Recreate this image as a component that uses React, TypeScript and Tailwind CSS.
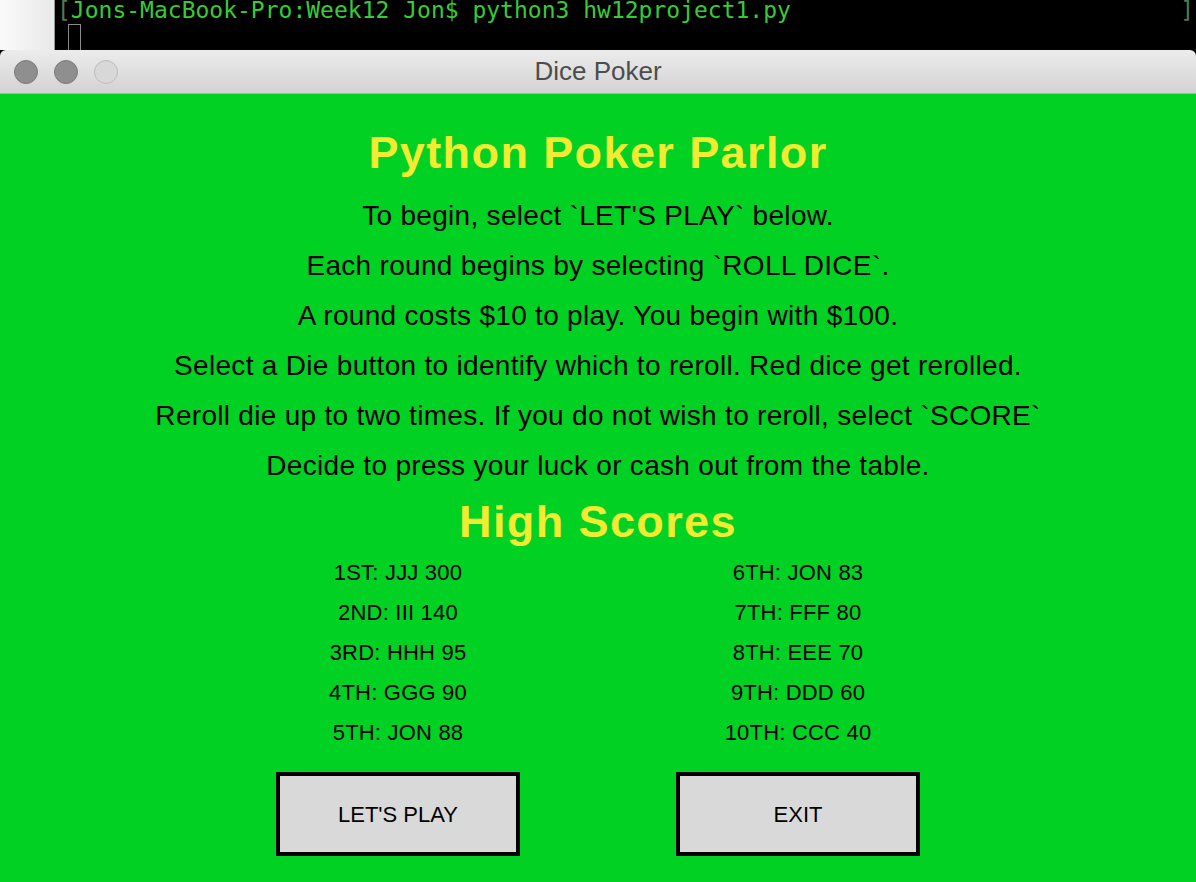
const rules = [
  'To begin, select `LET\'S PLAY` below.',
  'Each round begins by selecting `ROLL DICE`.',
  'A round costs $10 to play. You begin with $100.',
  'Select a Die button to identify which to reroll. Red dice get rerolled.',
  'Reroll die up to two times. If you do not wish to reroll, select `SCORE`',
  'Decide to press your luck or cash out from the table.',
];

const leftScores = ['1ST: JJJ 300', '2ND: III 140', '3RD: HHH 95', '4TH: GGG 90', '5TH: JON 88'];
const rightScores = ['6TH: JON 83', '7TH: FFF 80', '8TH: EEE 70', '9TH: DDD 60', '10TH: CCC 40'];

const sans = "font-['Liberation_Sans',Arial,Helvetica,sans-serif]";

const App: React.FC = () => {
  return (
    <div className={`w-[1196px] h-[882px] overflow-hidden flex flex-col bg-black ${sans}`}>
      {/* terminal behind the window */}
      <div className="flex h-[50px] shrink-0">
        <div className="w-[55px] bg-gradient-to-r from-[#fafafa] to-[#e9e9e9] border-r border-[#9a9a9a]" />
        <div className="flex-1 bg-black relative font-['DejaVu_Sans_Mono',monospace] text-[23px] leading-[20px] pl-[2px]">
          <div className="flex">
            <span className="text-[#4f7d4f]">[</span>
            <span className="text-[#36cc36] whitespace-pre">Jons-MacBook-Pro:Week12 Jon$ python3 hw12project1.py</span>
            <span className="ml-auto mr-[2px] text-[#4f7d4f]">]</span>
          </div>
          <div className="ml-[11px] mt-[4px] w-[13px] h-[30px] border border-[#8a8a8a]" />
        </div>
      </div>

      {/* window */}
      <div className="flex-1 flex flex-col">
        <div className="h-[44px] shrink-0 rounded-t-[6px] bg-gradient-to-b from-[#ececec] to-[#d3d3d3] border-b border-[#b1b1b1] relative flex items-center">
          <div className="flex gap-[16px] pl-[14px]">
            <span className="w-[24px] h-[24px] rounded-full bg-[#8f8f8f] border border-[#7b7b7b]" />
            <span className="w-[24px] h-[24px] rounded-full bg-[#8f8f8f] border border-[#7b7b7b]" />
            <span className="w-[24px] h-[24px] rounded-full bg-[#d8d8d8] border border-[#bdbdbd]" />
          </div>
          <div className="absolute inset-0 flex items-center justify-center text-[26px] text-[#4d4d4d]">
            Dice Poker
          </div>
        </div>

        <div className="flex-1 bg-[#00d123] flex flex-col items-center pt-[31px] text-black">
          <h1 className="h-[56px] leading-[56px] text-[45px] font-bold tracking-[1.4px] text-[#f1ec32]">
            Python Poker Parlor
          </h1>
          <div className="mt-[10px] flex flex-col items-center">
            {rules.map((r) => (
              <p key={r} className="h-[50px] leading-[50px] text-[28px] tracking-[0.3px] whitespace-pre">
                {r}
              </p>
            ))}
          </div>
          <h2 className="mt-[3px] h-[56px] leading-[56px] text-[45px] font-bold tracking-[1.4px] text-[#f1ec32]">
            High Scores
          </h2>
          <div className="mt-[3px] grid grid-cols-2 w-[800px]">
            {[leftScores, rightScores].map((col, i) => (
              <div key={i} className="flex flex-col items-center">
                {col.map((s) => (
                  <span key={s} className="h-[40px] leading-[40px] text-[22px] tracking-[0.2px]">
                    {s}
                  </span>
                ))}
              </div>
            ))}
          </div>
          <div className="mt-[19px] grid grid-cols-2 w-[800px]">
            {["LET'S PLAY", 'EXIT'].map((b) => (
              <button
                key={b}
                className="justify-self-center w-[244px] h-[84px] border-4 border-black bg-[#d9d9d9] text-[22px] text-black"
              >
                {b}
              </button>
            ))}
          </div>
        </div>
      </div>
    </div>
  );
};

export default App;
